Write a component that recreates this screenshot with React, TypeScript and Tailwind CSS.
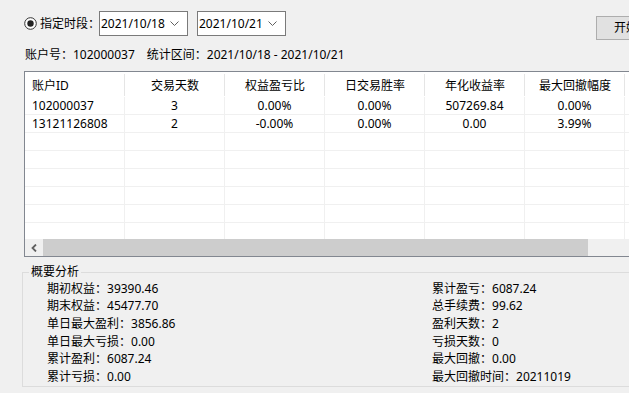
import React from "react";

const font = { fontFamily: '"Noto Sans", "Noto Sans CJK SC", sans-serif' };

const headers = ["账户ID", "交易天数", "权益盈亏比", "日交易胜率", "年化收益率", "最大回撤幅度", ""];
const rows = [
  ["102000037", "3", "0.00%", "0.00%", "507269.84", "0.00%", ""],
  ["13121126808", "2", "-0.00%", "0.00%", "0.00", "3.99%", ""],
  ["", "", "", "", "", "", ""],
  ["", "", "", "", "", "", ""],
  ["", "", "", "", "", "", ""],
  ["", "", "", "", "", "", ""],
  ["", "", "", "", "", "", ""],
  ["", "", "", "", "", "", ""],
];

const left = [
  ["期初权益", "39390.46"],
  ["期末权益", "45477.70"],
  ["单日最大盈利", "3856.86"],
  ["单日最大亏损", "0.00"],
  ["累计盈利", "6087.24"],
  ["累计亏损", "0.00"],
];
const right = [
  ["累计盈亏", "6087.24"],
  ["总手续费", "99.62"],
  ["盈利天数", "2"],
  ["亏损天数", "0"],
  ["最大回撤", "0.00"],
  ["最大回撤时间", "20211019"],
];

function Combo({ value }: { value: string }) {
  return (
    <div className="w-[89px] shrink-0 h-[25px] border border-[#7a7a7a] bg-white flex items-center pl-[1px] pr-[8px] justify-between">
      <span className="text-[12px] leading-none whitespace-nowrap">{value}</span>
      <svg width="9" height="6" viewBox="0 0 9 6">
        <path d="M0.5 0.5 L4.5 4.5 L8.5 0.5" fill="none" stroke="#606060" strokeWidth="1" />
      </svg>
    </div>
  );
}

export default function App() {
  return (
    <div className="w-[629px] h-[393px] bg-[#f0f0f0] overflow-hidden relative text-black text-[12px]" style={font}>
      {/* top row */}
      <div className="flex items-start h-[71px] relative">
        <div className="flex flex-col pl-[24px]">
          <div className="flex items-center pt-[11px] h-[36px] whitespace-nowrap">
            <svg width="13" height="13" viewBox="0 0 13 13" className="mr-[3px] shrink-0">
              <circle cx="6.5" cy="6.5" r="5.8" fill="white" stroke="#333" strokeWidth="1" />
              <circle cx="6.5" cy="6.5" r="3.2" fill="#222" />
            </svg>
            <span className="w-[59px] shrink-0 whitespace-nowrap">指定时段：</span>
            <Combo value="2021/10/18" />
            <div className="w-[9px] shrink-0" />
            <Combo value="2021/10/21" />
          </div>
          <div className="flex items-center mt-[13px] pl-[1px] leading-none whitespace-nowrap">
            <span>账户号：102000037</span>
            <span className="ml-[12px]">统计区间：2021/10/18 - 2021/10/21</span>
          </div>
        </div>
        <div className="absolute left-[596px] top-[16px] w-[33px] h-[24px] border-l border-y border-[#adadad] bg-[#e1e1e1] flex items-center pl-[17px] overflow-hidden whitespace-nowrap">
          开始
        </div>
      </div>

      {/* table */}
      <div className="ml-[24px] w-[640px] h-[186px] border border-[#828790] bg-white flex flex-col">
        <div className="h-[167px] overflow-hidden">
          <div className="flex h-[25px]">
            {headers.map((h, i) => (
              <div
                key={i}
                className={`w-[100px] shrink-0 h-full flex items-center pt-[3px] relative ${i === 0 ? "pl-[7px]" : "justify-center"}`}
              >
                {h}
                <div className="absolute right-0 top-[2px] bottom-[1px] w-px bg-[#e5e5e5]" />
              </div>
            ))}
          </div>
          {rows.map((r, ri) => (
            <div key={ri} className="flex h-[18px] border-b border-[#f0f0f0]">
              {r.map((c, ci) => (
                <div
                  key={ci}
                  className={`w-[100px] shrink-0 h-full flex items-center border-r border-[#f0f0f0] ${ci === 0 ? "pl-[7px]" : "justify-center"}`}
                >
                  {c}
                </div>
              ))}
            </div>
          ))}
        </div>
        <div className="h-[17px] flex bg-[#f0f0f0]">
          <div className="w-[18px] h-full flex items-center justify-center bg-[#f0f0f0]">
            <svg width="7" height="8" viewBox="0 0 7 8">
              <path d="M5 0.5 L1.5 4 L5 7.5" fill="none" stroke="#606060" strokeWidth="1.8" />
            </svg>
          </div>
          <div className="w-[545px] h-full bg-[#cdcdcd]" />
        </div>
      </div>

      {/* group box */}
      <div className="absolute left-[22px] top-[272px] w-[640px] h-[115px] border border-[#dcdcdc]">
        <div className="absolute left-[6px] top-[-9px] px-[2px] bg-[#f0f0f0] leading-[16px]">概要分析</div>
        <div className="flex pt-[7px]">
          <div className="w-[409px] pl-[24px] flex flex-col">
            {left.map(([k, v]) => (
              <div key={k} className="h-[17.6px] flex items-center whitespace-nowrap">
                {k}：{v}
              </div>
            ))}
          </div>
          <div className="flex flex-col">
            {right.map(([k, v]) => (
              <div key={k} className="h-[17.6px] flex items-center whitespace-nowrap">
                {k}：{v}
              </div>
            ))}
          </div>
        </div>
      </div>
    </div>
  );
}
